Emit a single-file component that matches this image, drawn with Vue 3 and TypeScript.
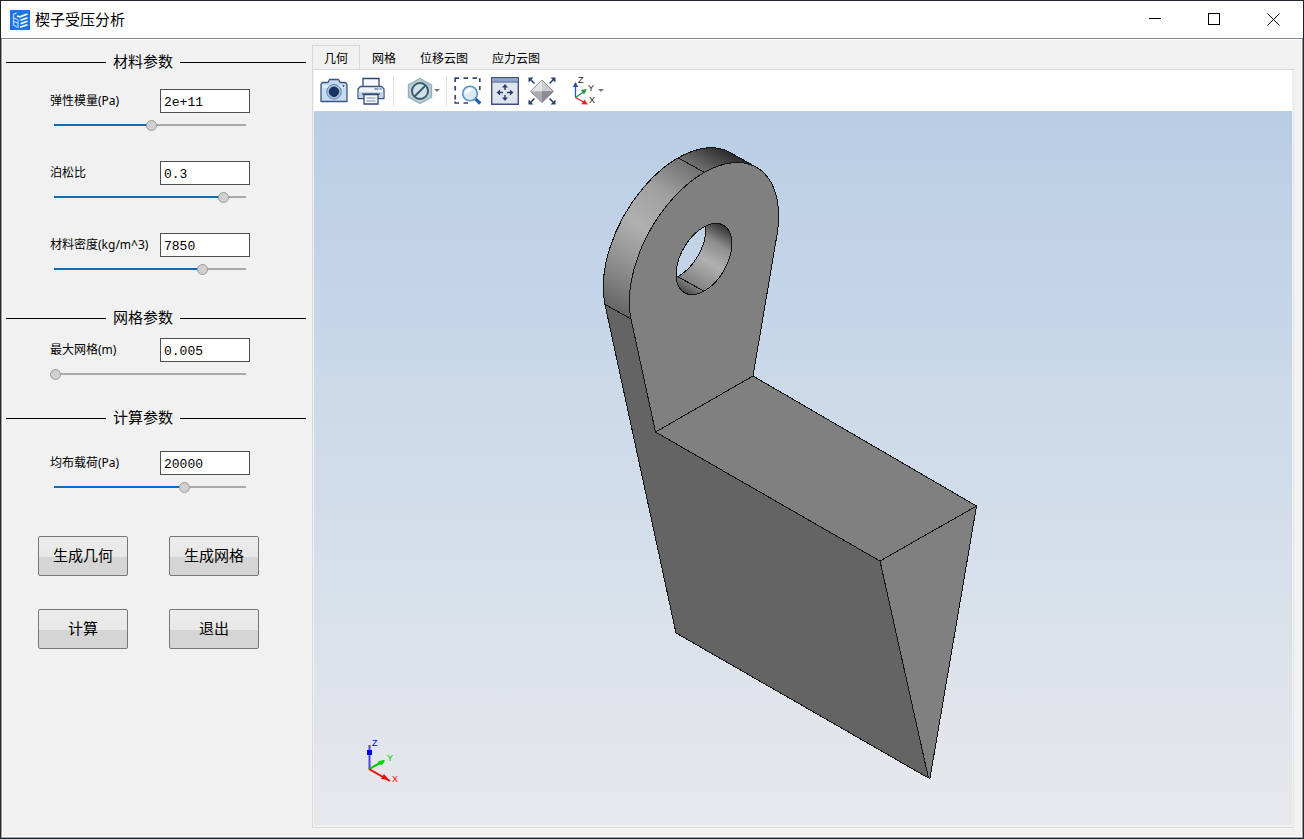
<script setup lang="ts">
import { reactive, ref } from 'vue'

interface Field {
  id: string
  label: string
  text: string
  position: number
}

interface Section {
  id: string
  title: string
  fields: Field[]
}

const sections = reactive<Section[]>([
  {
    id: 'material',
    title: '材料参数',
    fields: [
      { id: 'modulus', label: '弹性模量(Pa)', text: '2e+11', position: 51 },
      { id: 'poisson', label: '泊松比', text: '0.3', position: 89 },
      { id: 'density', label: '材料密度(kg/m^3)', text: '7850', position: 78 },
    ],
  },
  {
    id: 'mesh',
    title: '网格参数',
    fields: [{ id: 'size', label: '最大网格(m)', text: '0.005', position: 0 }],
  },
  {
    id: 'solve',
    title: '计算参数',
    fields: [{ id: 'load', label: '均布载荷(Pa)', text: '20000', position: 68 }],
  },
])

const actions = ['生成几何', '生成网格', '计算', '退出']
const tabs = ['几何', '网格', '位移云图', '应力云图']
const activeTab = ref('几何')
</script>

<template>
  <div class="window">
    <header class="titlebar">
      <svg class="logo" viewBox="0 0 20 20" aria-hidden="true">
        <rect width="20" height="20" fill="#1a73e8" />
        <path d="M3.500 4.500v10.500l4.500 2.500V9.500" fill="none" stroke="#a9ccf8" stroke-width="1.300" />
        <path d="M3 4.500 6.500 3M3.500 8l4 1.500M3.500 11.500l4 1.500" fill="none" stroke="#d5e6fc" stroke-width="1.200" />
        <path d="M7 6 10 6.800 17.500 4M10.500 10.300l7-2.500M10.500 13.800l7-2.500M10 17.300l7.500-2.500" fill="none" stroke="#fff" stroke-width="1.700" />
      </svg>
      <h1 class="title">楔子受压分析</h1>
      <div class="window-controls">
        <button type="button" aria-label="最小化">
          <svg viewBox="0 0 13 13"><path d="M0 5.500h12" /></svg>
        </button>
        <button type="button" aria-label="最大化">
          <svg viewBox="0 0 13 13"><path d="M.5.500h11v11H.5z" /></svg>
        </button>
        <button type="button" aria-label="关闭">
          <svg viewBox="0 0 13 13"><path class="smooth" d="m.5.500 12 12m0-12-12 12" /></svg>
        </button>
      </div>
    </header>

    <div class="body">
      <aside class="panel">
        <section v-for="section in sections" :key="section.id" :class="['section', section.id]">
          <h2 class="section-title">{{ section.title }}</h2>
          <div class="fields">
            <div v-for="field in section.fields" :key="field.id" class="field">
              <label :for="field.id">{{ field.label }}</label>
              <input :id="field.id" v-model="field.text" class="value" type="text" />
              <input
                v-model.number="field.position"
                class="slider"
                type="range"
                min="0"
                max="100"
                :aria-label="field.label"
                :style="{ '--fill': field.position + '%' }"
              />
            </div>
          </div>
        </section>
        <div class="actions">
          <button v-for="action in actions" :key="action" type="button">{{ action }}</button>
        </div>
      </aside>

      <main class="workspace">
        <nav class="tabs" role="tablist">
          <button
            v-for="tab in tabs"
            :key="tab"
            type="button"
            role="tab"
            :aria-selected="tab === activeTab"
            :class="{ active: tab === activeTab }"
            @click="activeTab = tab"
          >{{ tab }}</button>
        </nav>

        <div class="page">
          <div class="toolbar" role="toolbar">
            <button type="button" class="tool" aria-label="截图">
              <svg viewBox="0 0 28 28">
                <path d="M1 7.500 2.500 5.500h5.500l1.500-3h9l1.500 3h5.500L27 7.500v17H1z" fill="#c6daf0" stroke="#3a5584" stroke-width="1.300" stroke-linejoin="round" />
                <path d="M2.500 8h23v3h-23z" fill="#e0ebf8" />
                <circle cx="14" cy="14.800" r="7.300" fill="#a9c0dd" stroke="#4e6c9b" stroke-width=".8" />
                <circle cx="14" cy="14.800" r="4.700" fill="#183462" stroke="#0e2753" />
                <circle cx="23.500" cy="9" r="1" fill="#2f4c79" />
              </svg>
            </button>
            <button type="button" class="tool printer" aria-label="打印">
              <svg viewBox="0 0 28 28">
                <path d="M6 1.500h16v9H6z" fill="#f6f8fb" stroke="#2f4878" stroke-width="1.300" />
                <path d="M1 12 3.500 9.500h21L27 12v9.500H1z" fill="#f0f3f8" stroke="#3a5380" stroke-width="1.300" stroke-linejoin="round" />
                <path d="M1.800 15h24.400v5.800H1.800z" fill="#c8d2e0" />
                <path d="M17.500 12h7" stroke="#2f4878" stroke-width="1.100" stroke-dasharray="4 1" />
                <path d="M5 17h18" stroke="#3a5380" stroke-width="1.300" />
                <path d="M7 17.500h14V27H7z" fill="#f6f8fb" stroke="#2f4878" stroke-width="1.300" />
                <path d="M9.500 21h9m-9 3h9" stroke="#a3adbe" stroke-width="1.500" />
              </svg>
            </button>
            <span class="separator"></span>
            <button type="button" class="tool drop" aria-label="显示模式">
              <svg viewBox="0 0 28 28">
                <path d="m14 1.500 11.500 6.300v12.400L14 26.500 2.500 20.200V7.800z" fill="#bccfd6" stroke="#93b0b9" stroke-width="1.400" />
                <path d="m14 1.500 11.500 6.300L14 14z" fill="#adc4cc" />
                <circle cx="14" cy="14" r="8" fill="#d3e2e8" stroke="#3a5d70" stroke-width="2" />
                <path d="m8.500 19.500 11-11" stroke="#3a5d70" stroke-width="2" />
              </svg>
              <i class="arrow"></i>
            </button>
            <span class="separator"></span>
            <button type="button" class="tool" aria-label="框选缩放">
              <svg viewBox="0 0 28 28">
                <path d="M1.200 5V1.200H5m4.500 0h4.500m4.500 0H23M25.800 1.200V5m0 4v4M1.200 9v4.500m0 4.500v4.500m0 2V26H5m4.500 0h4.500" fill="none" stroke="#34466f" stroke-width="1.700" />
                <path d="m21 21.500 5.300 5" stroke="#1f66a8" stroke-width="3.200" />
                <circle cx="16" cy="16.500" r="7.300" fill="#d9eaf8" stroke="#5b94c8" stroke-width="1.600" />
                <path d="M11 18a5 5 0 0 1 8-5.500" fill="#f7fbff" />
              </svg>
            </button>
            <button type="button" class="tool" aria-label="平移">
              <svg viewBox="0 0 28 28">
                <path d="M.7.700h26.600v26.600H.7z" fill="#dfe5ed" stroke="#3f527c" stroke-width="1.400" />
                <path d="M1.400 1.400h25.200V4.500H1.400z" fill="#8ba3cc" />
                <path d="M1 5h26" stroke="#3f527c" />
                <path d="M14 9v4m0 5v4m-6-6.500h4m4 0h4" stroke="#2a3f6d" stroke-width="1.500" />
                <path d="m14 7 3 3.600h-6zM14 24l3-3.600h-6zM5.500 15.500l3.600-3v6zm17 0-3.600-3v6z" fill="#2a3f6d" />
              </svg>
            </button>
            <button type="button" class="tool" aria-label="适应窗口">
              <svg viewBox="0 0 28 28">
                <path d="m14 3 11.500 11.300H2.500z" fill="#e2e3e5" />
                <path d="m14 3 11.500 11.300H14z" fill="#cbcdd0" />
                <path d="M2.500 14.300h23L14 25.500z" fill="#a9abae" />
                <path d="M14 14.300h11.500L14 25.500z" fill="#8b8d91" />
                <path d="m14 3 11.500 11.300L14 25.500 2.500 14.300z" fill="none" stroke="#77797d" stroke-width=".8" />
                <path d="m2 2 4.500 4.500M26 2l-4.500 4.500M2 26l4.500-4.500M26 26l-4.500-4.500" stroke="#2a3f6d" stroke-width="1.500" />
                <path d="M.5.500h5l-5 5zm27 0h-5l5 5zM.5 27.500h5l-5-5zm27 0h-5l5-5z" fill="#2a3f6d" />
              </svg>
            </button>
            <button type="button" class="tool drop axes" aria-label="视图方向">
              <svg viewBox="0 0 28 30">
                <path d="M5.500 21.500V9" stroke="#2f53b5" stroke-width="1.300" />
                <path d="m5.500 6 2.700 5H2.800z" fill="#2446a8" />
                <path d="m5.500 21.500 8-5.500" stroke="#159447" stroke-width="1.300" />
                <path d="m17 13-3 5.500-3-4.500z" fill="#159447" />
                <path d="m5.500 21.500 8 4.500" stroke="#e02525" stroke-width="1.300" />
                <path d="m18 28.500-6.500-.3 2.800-4.700z" fill="#e02525" />
                <g fill="#222" font-family="Liberation Sans, sans-serif" font-size="9">
                  <text x="8" y="7">Z</text>
                  <text x="18" y="15">Y</text>
                  <text x="19" y="27">X</text>
                </g>
              </svg>
              <i class="arrow"></i>
            </button>
          </div>

          <svg class="viewport" viewBox="314 111 978 714" preserveAspectRatio="xMidYMid meet" role="img" aria-label="楔子三维模型">
            <defs>
              <linearGradient id="sky" gradientUnits="userSpaceOnUse" x1="0" y1="111" x2="0" y2="825">
                <stop offset="0" stop-color="#b9cde5" />
                <stop offset=".5" stop-color="#d0dcea" />
                <stop offset="1" stop-color="#e7e8ec" />
              </linearGradient>
              <linearGradient id="rim" gradientUnits="userSpaceOnUse" x1="631" y1="319" x2="728" y2="151">
                <stop offset="0" stop-color="#666" />
                <stop offset=".2" stop-color="#8c8c8c" />
                <stop offset=".44" stop-color="#b0b0b0" />
                <stop offset=".65" stop-color="#a0a0a0" />
                <stop offset=".84" stop-color="#727272" />
                <stop offset="1" stop-color="#2c2c2c" />
              </linearGradient>
              <linearGradient id="bore" gradientUnits="userSpaceOnUse" x1="684" y1="293" x2="724" y2="225">
                <stop offset="0" stop-color="#484848" />
                <stop offset=".16" stop-color="#858585" />
                <stop offset=".5" stop-color="#b0b0b0" />
                <stop offset=".75" stop-color="#8e8e8e" />
                <stop offset="1" stop-color="#303030" />
              </linearGradient>
              <clipPath id="hole">
                <ellipse cx="704" cy="259" rx="39" ry="23" transform="rotate(-60 704 259)" />
              </clipPath>
            </defs>

            <g stroke="#141414" stroke-linejoin="round" shape-rendering="crispEdges">
              <path d="M605 304.500A105.500 61-60 0 1 731 153L757 167.600 704 259 631 319z" fill="url(#rim)" />
              <path d="M605 304.500 631 319l24.500 113L880 561l48.500 217L676 633z" fill="#646464" />
              <path d="M631 319A105.500 61-60 1 1 777 234.700L753 376 655.500 432z" fill="#808080" />
              <path d="M655.500 432 753 376 976.500 506 880 561z" fill="#808080" />
              <path d="M880 561 976.500 506 930 778h-1.500z" fill="#808080" />
              <path d="m678 157.700 26.300 14.600" fill="none" />
              <g clip-path="url(#hole)">
                <path d="M660 215h90v90h-90z" fill="url(#bore)" stroke="none" />
                <ellipse cx="678" cy="244.400" rx="39" ry="23" transform="rotate(-60 678 244.400)" fill="url(#sky)" />
                <path d="m677.500 276.500 27 15" fill="none" />
              </g>
              <ellipse cx="704" cy="259" rx="39" ry="23" transform="rotate(-60 704 259)" fill="none" />
            </g>

            <g class="triad">
              <path d="M369.500 769v-24" stroke="#4444e0" stroke-width="2" />
              <path d="M367 750h5v5h-5z" fill="#0000e6" />
              <path d="m369 769 15-8" stroke="#00c800" stroke-width="2" />
              <path d="m385 760-3 5-5-1 2-3z" fill="#00d200" />
              <path d="m369 769 21 12" stroke="#f00" stroke-width="2" />
              <path d="m389 780-8-1 3-5z" fill="#f00" />
              <g font-family="Liberation Sans, sans-serif" font-size="9">
                <text x="372" y="746" fill="#0000e6">Z</text>
                <text x="387" y="761" fill="#00c800">Y</text>
                <text x="392" y="782" fill="#f00">X</text>
              </g>
            </g>
          </svg>
        </div>
      </main>
    </div>
  </div>
</template>

<style>
html,
body {
  margin: 0;
  background: #f1f1f1;
}
</style>

<style scoped>
.window {
  box-sizing: border-box;
  display: flex;
  flex-direction: column;
  min-height: 100vh;
  border: 1px solid #20242b;
  background: #f1f1f1;
  color: #000;
  font-family: "Noto Sans", "Noto Sans CJK SC", sans-serif;
  font-size: 12px;
}

button {
  margin: 0;
  padding: 0;
  border: 0;
  background: none;
  color: inherit;
  font: inherit;
}

.titlebar {
  display: flex;
  align-items: center;
  height: 37px;
  padding-left: 9px;
  border-bottom: 1px solid #80868d;
  background: #fff;
}

.logo {
  width: 20px;
  height: 20px;
  margin-right: 5px;
}

.title {
  flex: 1;
  margin: 0;
  padding-bottom: 2px;
  font-family: "Noto Sans CJK SC", sans-serif;
  font-size: 15px;
  font-weight: 400;
  line-height: 20px;
}

.window-controls {
  display: flex;
  height: 100%;
}

.window-controls button {
  display: grid;
  place-items: center;
  width: 59px;
}

.window-controls svg {
  width: 13px;
  height: 13px;
  fill: none;
  stroke: #000;
  shape-rendering: crispEdges;
}

.window-controls .smooth {
  shape-rendering: auto;
}

.body {
  display: flex;
  flex: 1;
  border: 1px solid #9a9da1;
  border-top: 0;
  box-shadow: inset 0 0 0 1px #fff;
}

.panel {
  box-sizing: border-box;
  flex: none;
  width: 310px;
  padding: 14px 6px 20px 4px;
}

.section-title {
  display: grid;
  grid-template-columns: 100px auto 1fr;
  align-items: center;
  gap: 7px;
  margin: 0;
  font-family: "Noto Sans CJK SC", sans-serif;
  font-size: 15px;
  font-weight: 400;
  line-height: 16px;
}

.section-title::before,
.section-title::after {
  content: "";
  height: 1px;
  margin-top: 2px;
  background: #000;
}

.fields {
  display: grid;
  gap: 28px;
  padding: 20px 0 32px 44px;
}

.mesh .fields {
  padding: 13px 0 27px 44px;
}

.solve .fields {
  padding: 26px 0 41px 44px;
}

.field {
  display: grid;
  grid-template-columns: 110px 90px;
  grid-template-rows: 24px 16px;
  row-gap: 4px;
  align-items: center;
}

.field label {
  line-height: 16px;
  white-space: nowrap;
}

.value {
  box-sizing: border-box;
  width: 90px;
  height: 24px;
  padding: 2px 3px 0;
  border: 1px solid #4d4d52;
  border-radius: 0;
  background: #fff;
  color: #000;
  font-family: "Liberation Mono", monospace;
  font-size: 13px;
}

.slider {
  grid-column: 1 / -1;
  width: 100%;
  height: 16px;
  margin: 0;
  appearance: none;
  background:
    linear-gradient(to right, #0f6cbf var(--fill), #a9a9a9 var(--fill))
    no-repeat 4px center / calc(100% - 8px) 2px;
}

.slider::-webkit-slider-runnable-track {
  height: 16px;
}

.slider::-webkit-slider-thumb {
  box-sizing: border-box;
  width: 11px;
  height: 11px;
  margin-top: 3px;
  appearance: none;
  border: 1px solid #9b9b9b;
  border-radius: 50%;
  background: #d0d0d0;
}

.actions {
  display: grid;
  grid-template-columns: 90px 90px;
  grid-auto-rows: 40px;
  gap: 33px 41px;
  padding-left: 32px;
}

.actions button {
  padding-bottom: 3px;
  border: 1px solid #777;
  border-radius: 2px;
  background: linear-gradient(#ececec, #e8e8e8 52%, #d5d5d5 52%);
  font-family: "Noto Sans CJK SC", sans-serif;
  font-size: 15px;
}

.workspace {
  display: flex;
  flex: 1;
  flex-direction: column;
  min-width: 0;
  padding: 6px 8px 9px 0;
}

.tabs {
  display: flex;
  height: 24px;
}

.tabs button {
  height: 24px;
  padding: 0 11px;
  border: 1px solid transparent;
  border-bottom: 0;
  font-family: "Noto Sans CJK SC", sans-serif;
}

.tabs .active {
  border-color: #d9d9d9;
}

.page {
  display: flex;
  flex: 1;
  flex-direction: column;
  padding: 0 1px 2px;
  border: 1px solid #d9d9d9;
  border-right-color: #e8e8e8;
}

.toolbar {
  display: flex;
  align-items: center;
  height: 41px;
  padding-left: 6px;
  background: #fff;
}

.tool {
  display: flex;
  align-items: center;
  margin-right: 9px;
}

.tool svg {
  width: 28px;
  height: 28px;
}

.tool.printer {
  margin-right: 8px;
}

.tool.drop {
  margin-right: 6px;
}

.arrow {
  border: 3px solid transparent;
  border-top-color: #777;
  border-bottom: 0;
}

.separator {
  width: 1px;
  height: 30px;
  margin-right: 7px;
  background: #ddd;
}

.separator:nth-of-type(1) {
  margin-right: 12px;
}

.axes {
  margin-left: 5px;
}

.axes svg {
  height: 30px;
}

.viewport {
  display: block;
  flex: 1;
  width: 100%;
  min-height: 0;
  background: linear-gradient(#b9cde5, #d0dcea 50%, #e7e8ec);
}
</style>
